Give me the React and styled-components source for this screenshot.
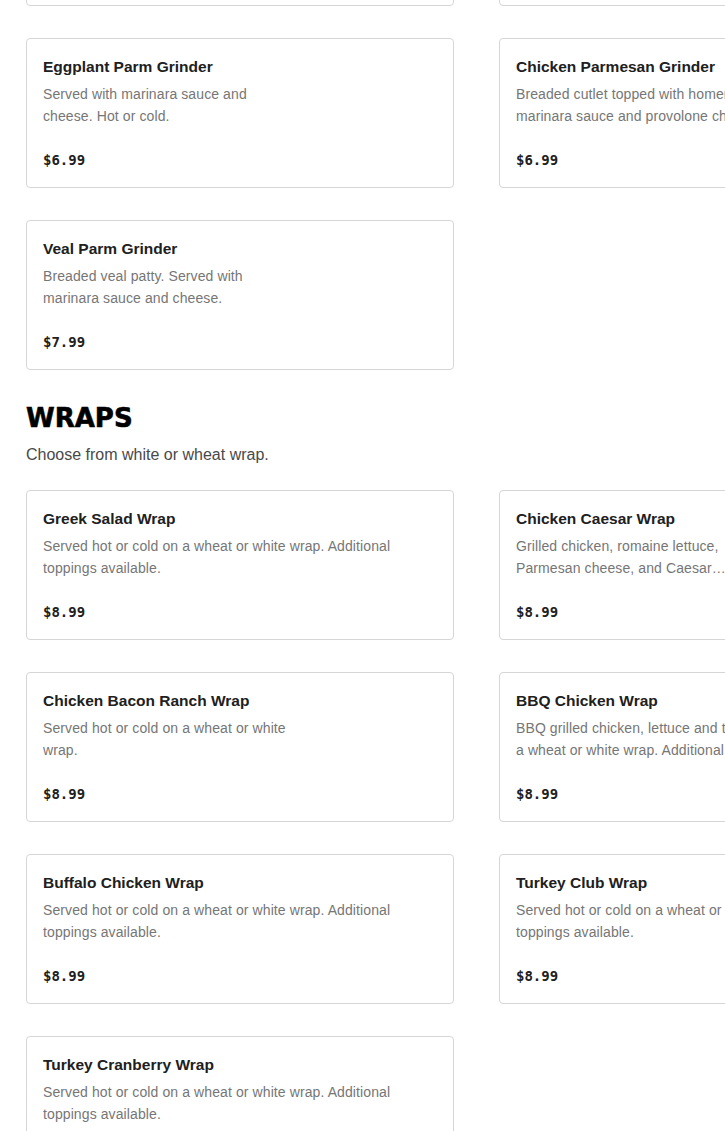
import styled, { createGlobalStyle } from "styled-components";

const Global = createGlobalStyle`
html, body {
  margin: 0;
  padding: 0;
  background: #fff;
  overflow: hidden;
}
* { box-sizing: border-box; }
`;

// page is shown scrolled, so the first grinder row sits above the frame
const Page = styled.div`
width: 960px;
padding: 0 0 0 26px;
margin-top: -144px;
font-family: "Liberation Sans", Arial, sans-serif;
`;

const Section = styled.section`
margin-bottom: 31px;
`;

const Heading = styled.h2`
margin: 0;
font-family: "DejaVu Sans", "Liberation Sans", sans-serif;
font-size: 26px;
line-height: 34px;
font-weight: 700;
color: #000;
-webkit-text-stroke: 0.6px #000;
`;

const Intro = styled.p`
margin: 8px 0 23px;
font-size: 16px;
line-height: 24px;
color: #494949;
`;

const Grid = styled.div`
display: grid;
grid-template-columns: 428px 428px;
column-gap: 45px;
row-gap: 32px;
`;

const Card = styled.div`
height: 150px;
border: 1px solid #d6d6d6;
border-radius: 4px;
padding: 17px 16px 16px 16px;
display: flex;
flex-direction: column;
overflow: hidden;
`;

const Title = styled.div`
font-size: 15.5px;
line-height: 22px;
font-weight: 700;
color: #202020;
white-space: nowrap;
`;

const Desc = styled.div`
margin-top: 5px;
max-width: ${(p) => p.$width || 394}px;
font-size: 14px;
line-height: 22px;
letter-spacing: 0.1px;
color: #767676;
display: -webkit-box;
-webkit-line-clamp: 2;
-webkit-box-orient: vertical;
overflow: hidden;
height: 44px;
`;

const Price = styled.div`
margin-top: auto;
font-family: "DejaVu Sans Mono", "Liberation Mono", monospace;
font-weight: 700;
font-size: 14px;
line-height: 22px;
color: #202020;
`;

const MenuCard = ({ name, desc, price, width }) => (
  <Card>
    <Title>{name}</Title>
    <Desc $width={width}>{desc}</Desc>
    <Price>{price}</Price>
  </Card>
);

const grinders = [
  { name: "Meatball Parm Grinder", desc: "Homemade meatballs with marinara sauce and cheese.", price: "$6.99", width: 250 },
  { name: "Sausage Parm Grinder", desc: "Italian sausage with marinara sauce and cheese.", price: "$6.99", width: 250 },
  { name: "Eggplant Parm Grinder", desc: "Served with marinara sauce and cheese. Hot or cold.", price: "$6.99", width: 250 },
  { name: "Chicken Parmesan Grinder", desc: "Breaded cutlet topped with homemade marinara sauce and provolone cheese.", price: "$6.99", width: 260 },
  { name: "Veal Parm Grinder", desc: "Breaded veal patty. Served with marinara sauce and cheese.", price: "$7.99", width: 250 },
];

const wraps = [
  { name: "Greek Salad Wrap", desc: "Served hot or cold on a wheat or white wrap. Additional toppings available." },
  { name: "Chicken Caesar Wrap", desc: "Grilled chicken, romaine lettuce, Parmesan cheese, and Caesar dressing on a wheat or white wrap.", width: 240 },
  { name: "Chicken Bacon Ranch Wrap", desc: "Served hot or cold on a wheat or white wrap.", width: 250 },
  { name: "BBQ Chicken Wrap", desc: "BBQ grilled chicken, lettuce and tomato on a wheat or white wrap. Additional toppings available.", width: 277 },
  { name: "Buffalo Chicken Wrap", desc: "Served hot or cold on a wheat or white wrap. Additional toppings available." },
  { name: "Turkey Club Wrap", desc: "Served hot or cold on a wheat or white wrap. Additional toppings available." },
  { name: "Turkey Cranberry Wrap", desc: "Served hot or cold on a wheat or white wrap. Additional toppings available." },
];

export default function App() {
  return (
    <>
      <Global />
      <Page>
        <Section>
          <Grid>
            {grinders.map((g) => (
              <MenuCard key={g.name} {...g} />
            ))}
          </Grid>
        </Section>
        <Section>
          <Heading>WRAPS</Heading>
          <Intro>Choose from white or wheat wrap.</Intro>
          <Grid>
            {wraps.map((w) => (
              <MenuCard key={w.name} price="$8.99" {...w} />
            ))}
          </Grid>
        </Section>
      </Page>
    </>
  );
}
